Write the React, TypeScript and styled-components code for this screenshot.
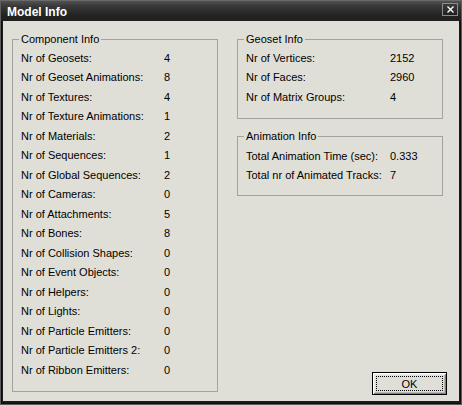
import React from "react";
import styled, { createGlobalStyle } from "styled-components";

const GlobalStyle = createGlobalStyle`
  html, body {
    margin: 0;
    padding: 0;
    background: #000;
  }
  body {
    font-family: "Liberation Sans", Arial, sans-serif;
    font-size: 11px;
  }
`;

const SWindow = styled.div`
  width: 462px;
  height: 405px;
  box-sizing: border-box;
  display: flex;
  flex-direction: column;
  padding: 0 3px 4px 3px;
  background-color: #1b1b1b;
  box-shadow: inset 0 0 0 1px #5e5e5e, inset 0 0 0 2px #0c0c0c;
`;

const STitleBar = styled.div`
  height: 21px;
  margin: 0 -3px;
  padding: 0 4px 0 7px;
  display: flex;
  justify-content: space-between;
  align-items: flex-start;
  background: linear-gradient(to bottom, #575757 0%, #383838 30%, #242424 70%, #1e1e1e 100%);
  box-shadow: inset 0 1px 0 #6a6a6a, inset 1px 0 0 #5e5e5e, inset -1px 0 0 #5e5e5e;
`;

const STitle = styled.span`
  color: #fff;
  font-weight: 700;
  font-size: 12px;
  line-height: 14px;
  padding-top: 5px;
`;

const SCloseButton = styled.button`
  width: 16px;
  height: 13px;
  margin-top: 3px;
  padding: 0;
  border: 1px solid #8c8c8c;
  background: linear-gradient(to bottom, #3c3c3c, #202020);
  display: flex;
  align-items: center;
  justify-content: center;
  cursor: pointer;
`;

const SBody = styled.div`
  flex: 1;
  display: grid;
  grid-template-columns: 206px 1fr;
  column-gap: 19px;
  align-items: start;
  padding: 12px 0 0 9px;
  background-color: #e0dfd7;
`;

const SGroup = styled.fieldset<{ $height: number; $padTop: number; $width?: number }>`
  box-sizing: border-box;
  margin: 0;
  width: ${(p) => (p.$width ? `${p.$width}px` : "auto")};
  height: ${(p) => p.$height}px;
  min-width: 0;
  padding: ${(p) => p.$padTop}px 0 0 8px;
  border: 1px solid #a2a2a0;
`;

const SLegend = styled.legend`
  margin-left: -2px;
  padding: 0 2px;
  line-height: 13px;
  color: #000;
`;

const SRows = styled.div<{ $labelWidth: number }>`
  display: grid;
  grid-template-columns: ${(p) => p.$labelWidth}px auto;
  grid-auto-rows: 19.5px;
  align-items: center;
  color: #000;
  white-space: nowrap;
`;

const SRightColumn = styled.div`
  align-self: stretch;
  display: flex;
  flex-direction: column;
  gap: 11px;
`;

const SOkButton = styled.button`
  margin-top: auto;
  margin-bottom: 6px;
  margin-right: 12px;
  align-self: flex-end;
  width: 75px;
  height: 23px;
  padding: 3px;
  box-sizing: border-box;
  border: 1px solid #000;
  background-color: #e0dfd7;
  box-shadow: inset 1px 1px 0 #ffffff, inset -1px -1px 0 #808080, inset 2px 2px 0 #ececE6,
    inset -2px -2px 0 #b8b7b0;
  font-family: "Liberation Sans", Arial, sans-serif;
  font-size: 11px;
  color: #000;
  cursor: pointer;
`;

const SFocusRing = styled.span`
  display: flex;
  height: 100%;
  align-items: center;
  justify-content: center;
  border: 1px dotted #000;
  box-sizing: border-box;
`;

type Row = [string, string];

const componentRows: Row[] = [
  ["Nr of Geosets:", "4"],
  ["Nr of Geoset Animations:", "8"],
  ["Nr of Textures:", "4"],
  ["Nr of Texture Animations:", "1"],
  ["Nr of Materials:", "2"],
  ["Nr of Sequences:", "1"],
  ["Nr of Global Sequences:", "2"],
  ["Nr of Cameras:", "0"],
  ["Nr of Attachments:", "5"],
  ["Nr of Bones:", "8"],
  ["Nr of Collision Shapes:", "0"],
  ["Nr of Event Objects:", "0"],
  ["Nr of Helpers:", "0"],
  ["Nr of Lights:", "0"],
  ["Nr of Particle Emitters:", "0"],
  ["Nr of Particle Emitters 2:", "0"],
  ["Nr of Ribbon Emitters:", "0"],
];

const geosetRows: Row[] = [
  ["Nr of Vertices:", "2152"],
  ["Nr of Faces:", "2960"],
  ["Nr of Matrix Groups:", "4"],
];

const animationRows: Row[] = [
  ["Total Animation Time (sec):", "0.333"],
  ["Total nr of Animated Tracks:", "7"],
];

const InfoRows: React.FC<{ rows: Row[]; labelWidth: number }> = ({ rows, labelWidth }) => (
  <SRows $labelWidth={labelWidth}>
    {rows.map(([label, value]) => (
      <React.Fragment key={label}>
        <span>{label}</span>
        <span>{value}</span>
      </React.Fragment>
    ))}
  </SRows>
);

export default function App() {
  return (
    <>
      <GlobalStyle />
      <SWindow>
        <STitleBar>
          <STitle>Model Info</STitle>
          <SCloseButton type="button" aria-label="Close">
            <svg width="7" height="7" viewBox="0 0 7 7">
              <path d="M0.5 0.5 L6.5 6.5 M6.5 0.5 L0.5 6.5" stroke="#fff" strokeWidth="1.4" />
            </svg>
          </SCloseButton>
        </STitleBar>
        <SBody>
          <SGroup $height={359} $padTop={2}>
            <SLegend>Component Info</SLegend>
            <InfoRows rows={componentRows} labelWidth={143} />
          </SGroup>
          <SRightColumn>
            <SGroup $height={86} $padTop={2} $width={206}>
              <SLegend>Geoset Info</SLegend>
              <InfoRows rows={geosetRows} labelWidth={144} />
            </SGroup>
            <SGroup $height={66} $padTop={3} $width={206}>
              <SLegend>Animation Info</SLegend>
              <InfoRows rows={animationRows} labelWidth={144} />
            </SGroup>
            <SOkButton type="button">
              <SFocusRing>OK</SFocusRing>
            </SOkButton>
          </SRightColumn>
        </SBody>
      </SWindow>
    </>
  );
}
